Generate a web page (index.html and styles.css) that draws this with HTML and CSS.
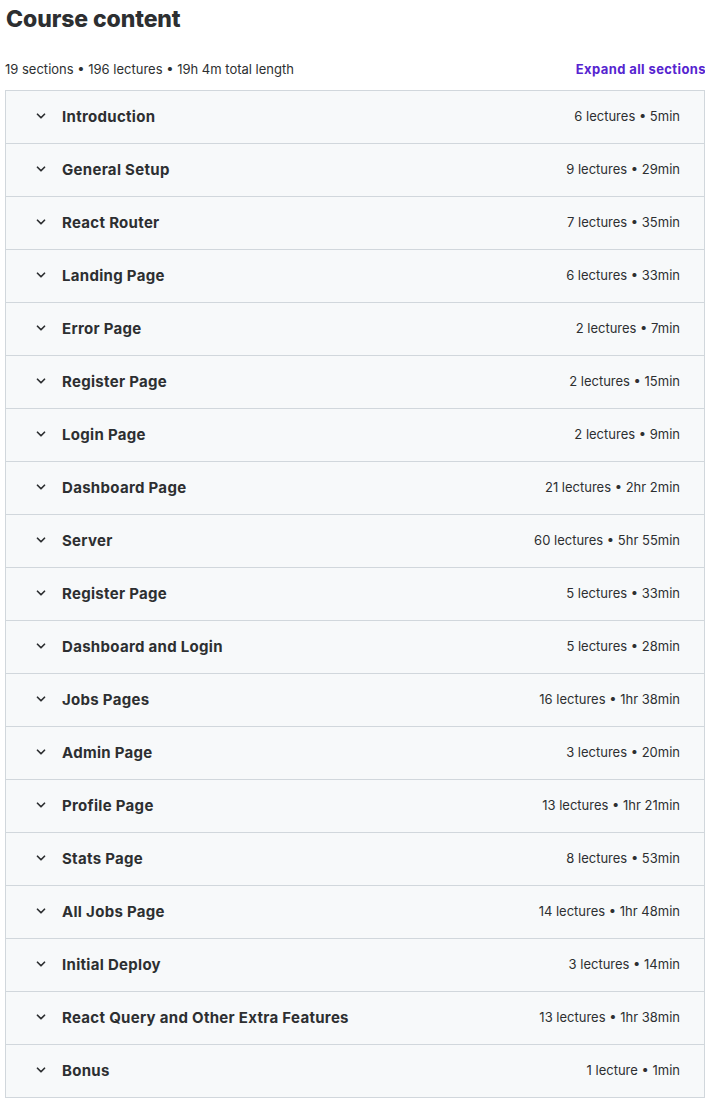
FILE: index.html
```html
<html lang="en">
<head>
    <meta charset="UTF-8">
    <meta name="viewport" content="width=device-width, initial-scale=1.0">
    <title>Course content</title>
    <link rel="stylesheet" href="styles.css">
</head>
<body>
    <div class="curriculum">
        <h2 class="curriculum-title">Course content</h2>
        <div class="curriculum-meta">
            <span>19 sections • 196 lectures • 19h 4m total length</span>
            <button type="button" class="expand-all">Expand all sections</button>
        </div>

        <div class="sections" id="sections"></div>
    </div>

    <script>
        const sections = [
            ["Introduction", "6 lectures • 5min"],
            ["General Setup", "9 lectures • 29min"],
            ["React Router", "7 lectures • 35min"],
            ["Landing Page", "6 lectures • 33min"],
            ["Error Page", "2 lectures • 7min"],
            ["Register Page", "2 lectures • 15min"],
            ["Login Page", "2 lectures • 9min"],
            ["Dashboard Page", "21 lectures • 2hr 2min"],
            ["Server", "60 lectures • 5hr 55min"],
            ["Register Page", "5 lectures • 33min"],
            ["Dashboard and Login", "5 lectures • 28min"],
            ["Jobs Pages", "16 lectures • 1hr 38min"],
            ["Admin Page", "3 lectures • 20min"],
            ["Profile Page", "13 lectures • 1hr 21min"],
            ["Stats Page", "8 lectures • 53min"],
            ["All Jobs Page", "14 lectures • 1hr 48min"],
            ["Initial Deploy", "3 lectures • 14min"],
            ["React Query and Other Extra Features", "13 lectures • 1hr 38min"],
            ["Bonus", "1 lecture • 1min"]
        ];

        // Build one collapsed row per section
        const list = document.getElementById("sections");
        sections.forEach(function (s) {
            const row = document.createElement("div");
            row.className = "section-row";
            row.innerHTML =
                '<svg class="chevron" viewBox="0 0 24 24" width="14" height="14"><path d="M6 9l6 6 6-6" /></svg>' +
                '<span class="section-name"></span>' +
                '<span class="section-info"></span>';
            row.querySelector(".section-name").textContent = s[0];
            row.querySelector(".section-info").textContent = s[1];
            list.appendChild(row);
        });
    </script>
</body>
</html>
```

FILE: styles.css
```css
body {
    font-family: Inter, "Noto Sans", sans-serif;
    margin: 0;
    padding: 0 0 0 5px;
    background-color: #fff;
    color: #2d2f31;
}

.curriculum {
    width: 700px;
}

.curriculum-title {
    font-size: 23px;
    font-weight: 800;
    margin: 0;
    padding: 5px 0 0 1px;
    line-height: 28px;
    letter-spacing: -0.1px;
}

.curriculum-meta {
    display: flex;
    justify-content: space-between;
    align-items: center;
    line-height: 20px;
    margin: 26px 0 11px;
    font-size: 13px;
}

.expand-all {
    background: none;
    border: none;
    padding: 0;
    color: #5624d0;
    font-family: inherit;
    font-weight: 700;
    font-size: 13px;
    letter-spacing: 0.4px;
    cursor: pointer;
    margin-right: -1px;
}

.sections {
    border: 1px solid #d1d7dc;
    border-bottom: none;
}

.section-row {
    display: flex;
    align-items: center;
    box-sizing: border-box;
    height: 53px;
    background-color: #f7f9fa;
    border-bottom: 1px solid #d1d7dc;
    padding: 0 24px 2px 28px;
}

.chevron {
    fill: none;
    stroke: #2d2f31;
    stroke-width: 3;
    stroke-linecap: round;
    stroke-linejoin: round;
    margin-right: 14px;
}

.section-name {
    font-weight: 700;
    font-size: 15px;
    letter-spacing: 0.3px;
    flex: 1;
}

.section-info {
    font-size: 13px;
}
```
